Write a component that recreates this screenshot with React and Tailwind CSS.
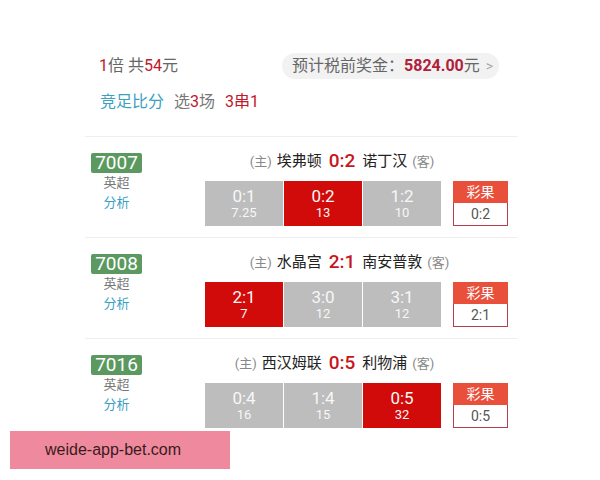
const matches = [
  {
    no: '7007',
    home: '埃弗顿',
    away: '诺丁汉',
    score: '0:2',
    cells: [
      { s: '0:1', o: '7.25' },
      { s: '0:2', o: '13', hit: true },
      { s: '1:2', o: '10' },
    ],
  },
  {
    no: '7008',
    home: '水晶宫',
    away: '南安普敦',
    score: '2:1',
    cells: [
      { s: '2:1', o: '7', hit: true },
      { s: '3:0', o: '12' },
      { s: '3:1', o: '12' },
    ],
  },
  {
    no: '7016',
    home: '西汉姆联',
    away: '利物浦',
    score: '0:5',
    cells: [
      { s: '0:4', o: '16' },
      { s: '1:4', o: '15' },
      { s: '0:5', o: '32', hit: true },
    ],
  },
];

function MatchRow({ m }) {
  return (
    <div className="flex h-[101px] border-t border-[#eeeeee]">
      <div className="flex w-[63px] flex-col items-center pt-[16px]">
        <div className="flex h-[20px] w-[51px] items-center justify-center rounded-[2px] bg-[#5b9960] text-[19px] leading-[20px] text-white">
          {m.no}
        </div>
        <div className="text-[13px] leading-[20px] text-[#777]">英超</div>
        <div className="text-[13px] leading-[20px] text-[#3b9fc4]">分析</div>
      </div>
      <div className="flex flex-col pt-[10px]">
        <div className="ml-[27px] grid h-[24px] w-[334px] grid-cols-[1fr_auto_1fr] items-center">
          <div className="flex items-center justify-end">
            <span className="mr-[5px] text-[13px] text-[#888]">(主)</span>
            <span className="text-[15px] text-[#222]">{m.home}</span>
          </div>
          <span className="mx-[7px] text-[19px] font-medium text-[#c8161d]">{m.score}</span>
          <div className="flex items-center">
            <span className="text-[15px] text-[#222]">{m.away}</span>
            <span className="ml-[5px] text-[13px] text-[#888]">(客)</span>
          </div>
        </div>
        <div className="mt-[10px] flex items-start">
          <div className="ml-[57px] flex h-[45px] gap-px">
            {m.cells.map((c) => (
              <div
                key={c.s}
                className={`flex w-[78px] flex-col items-center justify-center ${c.hit ? 'bg-[#d10a0a]' : 'bg-[#bdbdbd]'}`}
              >
                <span className="text-[17px] leading-[18px] text-[#f7f7f7]">{c.s}</span>
                <span className="text-[13px] leading-[15px] text-[#f7f7f7]">{c.o}</span>
              </div>
            ))}
          </div>
          <div className="ml-[12px] flex h-[45px] w-[55px] flex-col">
            <div className="flex h-[22px] items-center justify-center bg-[#e9503b] text-[14px] text-white">彩果</div>
            <div className="flex flex-1 items-center justify-center border border-t-0 border-[#b3404c] bg-white text-[14px] text-[#555]">
              {m.score}
            </div>
          </div>
        </div>
      </div>
    </div>
  );
}

export default function App() {
  return (
    <div className="relative h-[480px] w-[600px] overflow-hidden bg-white font-['Roboto','Noto_Sans_CJK_SC',sans-serif]">
      <div className="ml-[85px] w-[432px] pt-[53px]">
        <div className="flex h-[26px] items-center justify-between pr-[18px]">
          <div className="ml-[14px] text-[16px] text-[#666]">
            <span className="text-[#c0172b]">1</span>倍 共<span className="text-[#c0172b]">54</span>元
          </div>
          <div className="flex h-[26px] w-[217px] items-center rounded-full bg-[#f2f2f2] pl-[10px] text-[16px] text-[#666]">
            预计税前奖金：
            <span className="font-bold text-[#b0203a]">5824.00</span>元
            <span className="ml-[6px] text-[14px] text-[#aaa]">&gt;</span>
          </div>
        </div>
        <div className="ml-[15px] mt-[13px] flex h-[20px] items-center text-[16px]">
          <span className="text-[#3b9fc4]">竞足比分</span>
          <span className="ml-[10px] text-[#777]">
            选<span className="text-[#c0172b]">3</span>场
          </span>
          <span className="ml-[10px] text-[#c0172b]">3串1</span>
        </div>
        <div className="mt-[24px]">
          {matches.map((m) => (
            <MatchRow key={m.no} m={m} />
          ))}
        </div>
      </div>

      <div className="absolute left-[10px] top-[431px] flex h-[38px] w-[220px] items-center bg-[#ef8a9e] pl-[35px] font-['Liberation_Sans',sans-serif] text-[16px] text-[#3a1a20]">
        weide-app-bet.com
      </div>
    </div>
  );
}
